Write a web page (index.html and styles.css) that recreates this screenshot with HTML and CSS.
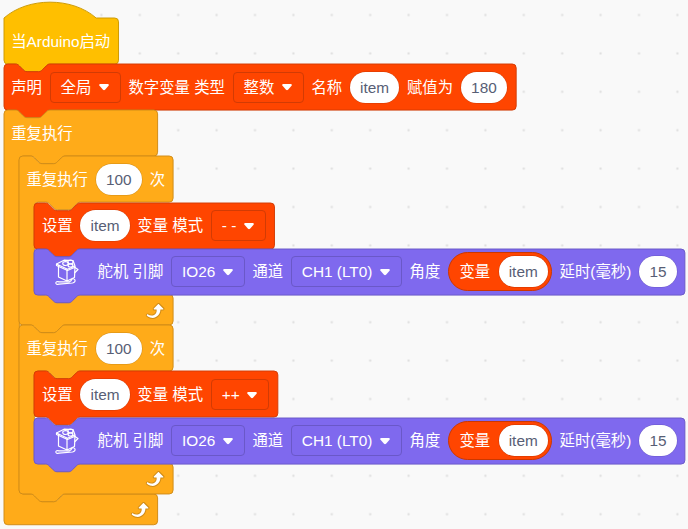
FILE: index.html
```html
<!DOCTYPE html>
<html lang="zh-CN">
<head>
<meta charset="utf-8">
<title>Arduino</title>
<link rel="stylesheet" href="styles.css">
</head>
<body>
<svg class="defs" width="0" height="0" aria-hidden="true">
  <defs>
    <pattern id="grid" x="5.4" y="-4.2" width="38.4" height="38.4" patternUnits="userSpaceOnUse">
      <rect x="18.2" y="18.2" width="2" height="2" fill="#ddd"/>
    </pattern>
    <path id="caret" d="M1.2 0H8.8Q10.4 .4 9.5 1.8L6 5.8Q5 6.7 4 5.8L.5 1.8Q-.4 .4 1.2 0Z" fill="#fff"/>
    <g id="loop">
      <path fill="#cf8b17" d="M23.3,11c-0.3,0.6-0.9,1-1.5,1h-1.6c-0.1,1.3-0.5,2.5-1.1,3.6c-0.9,1.7-2.3,3.2-4.1,4.1c-1.7,0.9-3.6,1.2-5.5,0.9c-1.8-0.3-3.5-1.1-4.9-2.3c-0.7-0.7-0.7-1.9,0-2.6c0.6-0.6,1.6-0.7,2.3-0.2H7c0.9,0.6,1.9,0.9,2.9,0.9s1.9-0.3,2.7-0.9c1.1-0.8,1.8-2.1,1.8-3.5h-1.5c-0.9,0-1.7-0.7-1.7-1.7c0-0.4,0.2-0.9,0.5-1.2l4.4-4.4c0.7-0.6,1.7-0.6,2.4,0L23,9.2C23.5,9.7,23.6,10.4,23.3,11z"/>
      <path fill="#fff" d="M21.8,11h-2.6c0,1.5-0.3,2.9-1,4.2c-0.8,1.6-2.1,2.8-3.7,3.6c-1.5,0.8-3.3,1.1-4.9,0.8c-1.6-0.2-3.2-1-4.4-2.1c-0.4-0.3-0.4-0.9-0.1-1.2c0.3-0.4,0.9-0.4,1.2-0.1c1,0.7,2.2,1.1,3.4,1.1s2.3-0.3,3.3-1c0.9-0.6,1.6-1.5,2-2.6c0.3-0.9,0.4-1.8,0.2-2.8h-2.4c-0.4,0-0.7-0.3-0.7-0.7c0-0.2,0.1-0.3,0.2-0.4l4.4-4.4c0.3-0.3,0.7-0.3,0.9,0L22,9.8c0.3,0.3,0.4,0.6,0.3,0.9S22,11,21.8,11z"/>
    </g>
    <g id="servo" fill="none" stroke="#fff" stroke-width="1.2" stroke-linejoin="round" stroke-linecap="round">
      <path d="M1.5 5L9 1.2L18 1.5L20 7L12.5 10.2ZM3.5 6V18L12 22V10.2M20 7L19.5 18.5L12 22"/>
      <path d="M1.5 5V6.5L12.5 11.5L20 8.2"/>
      <ellipse cx="10.5" cy="4.6" rx="2.8" ry="1.9"/>
      <ellipse cx="15.5" cy="3" rx="2.6" ry="2"/>
      <ellipse cx="15.5" cy="6.4" rx="2.4" ry="1.6"/>
      <path d="M20 8.5L23 10.5L20 13.5"/>
      <path d="M4 22.8Q1 22.2 .8 24Q1 25.8 4 25.2L17.5 24Q20.5 23.4 20 21Q19 19.2 17 20Q16.2 22 14.5 22.8Z"/>
    </g>
    <path id="repeat-shape" d="M0,4A4,4 0 0,1 4,0H12c2,0 3,1 4,2l4,4c1,1 2,2 4,2h12c2,0 3,-1 4,-2l4,-4c1,-1 2,-2 4,-2H156.500a4,4 0 0,1 4,4V44a4,4 0 0,1 -4,4H64c-2,0 -3,1 -4,2l-4,4c-1,1 -2,2 -4,2h-12c-2,0 -3,-1 -4,-2l-4,-4c-1,-1 -2,-2 -4,-2H20a4,4 0 0,0 -4,4V140a4,4 0 0,0 4,4h8c2,0 3,1 4,2l4,4c1,1 2,2 4,2h12c2,0 3,-1 4,-2l4,-4c1,-1 2,-2 4,-2H156.500a4,4 0 0,1 4,4V172a4,4 0 0,1 -4,4H48c-2,0 -3,1 -4,2l-4,4c-1,1 -2,2 -4,2h-12c-2,0 -3,-1 -4,-2l-4,-4c-1,-1 -2,-2 -4,-2H4a4,4 0 0,1 -4,-4Z"/>
    <path id="servo-shape" d="M0,4A4,4 0 0,1 4,0H12c2,0 3,1 4,2l4,4c1,1 2,2 4,2h12c2,0 3,-1 4,-2l4,-4c1,-1 2,-2 4,-2H674a4,4 0 0,1 4,4V44a4,4 0 0,1 -4,4H48c-2,0 -3,1 -4,2l-4,4c-1,1 -2,2 -4,2h-12c-2,0 -3,-1 -4,-2l-4,-4c-1,-1 -2,-2 -4,-2H4a4,4 0 0,1 -4,-4Z"/>
  </defs>
</svg>
<main class="workspace">
  <svg class="grid" width="688" height="529"><rect width="688" height="529" fill="url(#grid)"/></svg>
  <div class="stack">
    <section class="block event">
      <svg class="shape"><path transform="scale(.96)" d="M0,0c25,-22 71,-22 96,0H115.300a4,4 0 0,1 4,4V44a4,4 0 0,1 -4,4H48c-2,0 -3,1 -4,2l-4,4c-1,1 -2,2 -4,2h-12c-2,0 -3,-1 -4,-2l-4,-4c-1,-1 -2,-2 -4,-2H4a4,4 0 0,1 -4,-4Z"/></svg>
      <div class="row"><span>当Arduino启动</span></div>
    </section>
    <section class="block data">
      <svg class="shape"><path transform="scale(.96)" d="M0,4A4,4 0 0,1 4,0H12c2,0 3,1 4,2l4,4c1,1 2,2 4,2h12c2,0 3,-1 4,-2l4,-4c1,-1 2,-2 4,-2H529.500a4,4 0 0,1 4,4V44a4,4 0 0,1 -4,4H48c-2,0 -3,1 -4,2l-4,4c-1,1 -2,2 -4,2h-12c-2,0 -3,-1 -4,-2l-4,-4c-1,-1 -2,-2 -4,-2H4a4,4 0 0,1 -4,-4Z"/></svg>
      <div class="row">
        <span>声明</span><span class="menu">全局<svg class="caret"><use href="#caret"/></svg></span>
        <span>数字变量 类型</span><span class="menu">整数<svg class="caret"><use href="#caret"/></svg></span>
        <span>名称</span><span class="field item">item</span><span>赋值为</span><span class="field number">180</span>
      </div>
    </section>
    <section class="block control">
      <svg class="shape"><path transform="scale(.96)" d="M0,4A4,4 0 0,1 4,0H12c2,0 3,1 4,2l4,4c1,1 2,2 4,2h12c2,0 3,-1 4,-2l4,-4c1,-1 2,-2 4,-2H156a4,4 0 0,1 4,4V44a4,4 0 0,1 -4,4H64c-2,0 -3,1 -4,2l-4,4c-1,1 -2,2 -4,2h-12c-2,0 -3,-1 -4,-2l-4,-4c-1,-1 -2,-2 -4,-2H20a4,4 0 0,0 -4,4V396a4,4 0 0,0 4,4h8c2,0 3,1 4,2l4,4c1,1 2,2 4,2h12c2,0 3,-1 4,-2l4,-4c1,-1 2,-2 4,-2H156a4,4 0 0,1 4,4V428a4,4 0 0,1 -4,4H4a4,4 0 0,1 -4,-4Z"/></svg>
      <div class="row"><span>重复执行</span></div>
      <div class="body">
        <section class="block control">
          <svg class="shape"><use href="#repeat-shape" transform="scale(.96)"/></svg>
          <div class="row"><span>重复执行</span><span class="field number">100</span><span>次</span></div>
          <div class="body">
            <section class="block data">
              <svg class="shape"><path transform="scale(.96)" d="M0,4A4,4 0 0,1 4,0H12c2,0 3,1 4,2l4,4c1,1 2,2 4,2h12c2,0 3,-1 4,-2l4,-4c1,-1 2,-2 4,-2H246.500a4,4 0 0,1 4,4V44a4,4 0 0,1 -4,4H48c-2,0 -3,1 -4,2l-4,4c-1,1 -2,2 -4,2h-12c-2,0 -3,-1 -4,-2l-4,-4c-1,-1 -2,-2 -4,-2H4a4,4 0 0,1 -4,-4Z"/></svg>
              <div class="row"><span>设置</span><span class="field item">item</span><span>变量 模式</span><span class="menu">- -<svg class="caret"><use href="#caret"/></svg></span></div>
            </section>
            <section class="block motor">
              <svg class="shape"><use href="#servo-shape" transform="scale(.96)"/></svg>
              <div class="row">
                <svg class="device"><use href="#servo" x="13" y="6"/></svg>
                <span>舵机 引脚</span><span class="menu">IO26<svg class="caret"><use href="#caret"/></svg></span>
                <span>通道</span><span class="menu channel">CH1 (LT0)<svg class="caret"><use href="#caret"/></svg></span>
                <span>角度</span><span class="reporter">变量<span class="field item">item</span></span>
                <span>延时(毫秒)</span><span class="field delay">15</span>
              </div>
            </section>
          </div>
          <div class="foot"><svg class="loop" viewBox="0 0 24 24"><use href="#loop"/></svg></div>
        </section>
        <section class="block control">
          <svg class="shape"><use href="#repeat-shape" transform="scale(.96)"/></svg>
          <div class="row"><span>重复执行</span><span class="field number">100</span><span>次</span></div>
          <div class="body">
            <section class="block data">
              <svg class="shape"><path transform="scale(.96)" d="M0,4A4,4 0 0,1 4,0H12c2,0 3,1 4,2l4,4c1,1 2,2 4,2h12c2,0 3,-1 4,-2l4,-4c1,-1 2,-2 4,-2H250a4,4 0 0,1 4,4V44a4,4 0 0,1 -4,4H48c-2,0 -3,1 -4,2l-4,4c-1,1 -2,2 -4,2h-12c-2,0 -3,-1 -4,-2l-4,-4c-1,-1 -2,-2 -4,-2H4a4,4 0 0,1 -4,-4Z"/></svg>
              <div class="row"><span>设置</span><span class="field item">item</span><span>变量 模式</span><span class="menu">++<svg class="caret"><use href="#caret"/></svg></span></div>
            </section>
            <section class="block motor">
              <svg class="shape"><use href="#servo-shape" transform="scale(.96)"/></svg>
              <div class="row">
                <svg class="device"><use href="#servo" x="13" y="6"/></svg>
                <span>舵机 引脚</span><span class="menu">IO26<svg class="caret"><use href="#caret"/></svg></span>
                <span>通道</span><span class="menu channel">CH1 (LT0)<svg class="caret"><use href="#caret"/></svg></span>
                <span>角度</span><span class="reporter">变量<span class="field item">item</span></span>
                <span>延时(毫秒)</span><span class="field delay">15</span>
              </div>
            </section>
          </div>
          <div class="foot"><svg class="loop" viewBox="0 0 24 24"><use href="#loop"/></svg></div>
        </section>
      </div>
      <div class="foot"><svg class="loop" viewBox="0 0 24 24"><use href="#loop"/></svg></div>
    </section>
  </div>
</main>
</body>
</html>
```
FILE: styles.css
```css
* { box-sizing: border-box; }
body { margin: 0; background: #f9f9f9; }
.defs { position: absolute; }
.workspace {
  position: relative;
  width: 688px;
  height: 529px;
  overflow: hidden;
  font: 15.36px/20px "Liberation Sans", "Noto Sans CJK SC", sans-serif;
  color: #fff;
  white-space: nowrap;
}
.grid { position: absolute; inset: 0; }
.stack { position: relative; padding: 18.2px 0 0 3.5px; }
.block { position: relative; }
/* The outline lies behind the block's own row and overhangs by the tab. */
.shape {
  position: absolute;
  left: 0;
  top: 0;
  width: 1px;
  height: 1px;
  overflow: visible;
  fill: var(--fill);
  stroke: var(--line);
}
.event { --fill: #ffbf00; --line: #cc9900; }
.data { --fill: #ff4500; --line: #d23b04; }
.control { --fill: #ffab19; --line: #cf8b17; }
.motor { --fill: #7f69ee; --line: #6a58c8; }
.row {
  position: relative;
  display: flex;
  align-items: center;
  gap: 7.68px;
  height: 46.08px;
  padding-left: 7.68px;
}
.row > *, .reporter > * { flex: none; }
.row > span:not([class]) { padding-top: 1.6px; }
.body { padding-left: 15.36px; }
.field {
  display: flex;
  align-items: center;
  justify-content: center;
  height: 30.72px;
  padding-top: 1.2px;
  border-radius: 16px;
  background: #fff;
  color: #575e75;
  box-shadow: 0 0 0 .5px var(--line);
}
.item { width: 49.4px; }
.number { width: 46.4px; }
.delay { width: 38.4px; }
.menu {
  display: flex;
  align-items: center;
  height: 31px;
  padding: 1.4px 11px 0 10px;
  border: 1px solid var(--line);
  border-radius: 4px;
}
.channel { width: 111px; }
.caret { width: 10px; height: 7px; margin-left: 7.5px; flex: none; }
.menu.channel .caret { margin-left: auto; }
.reporter {
  --line: #cc3700;
  display: flex;
  align-items: center;
  justify-content: space-between;
  width: 104px;
  height: 39px;
  padding: 0 3px 0 10.5px;
  border: 1px solid #cc3700;
  border-radius: 20px;
  background: #ff4500;
}
.device { width: 48px; height: 38px; }
.foot {
  position: relative;
  display: flex;
  align-items: center;
  justify-content: flex-end;
  width: 154.5px;
  height: 30.72px;
  padding-right: 8px;
}
.loop { width: 23.04px; height: 23.04px; }
```
